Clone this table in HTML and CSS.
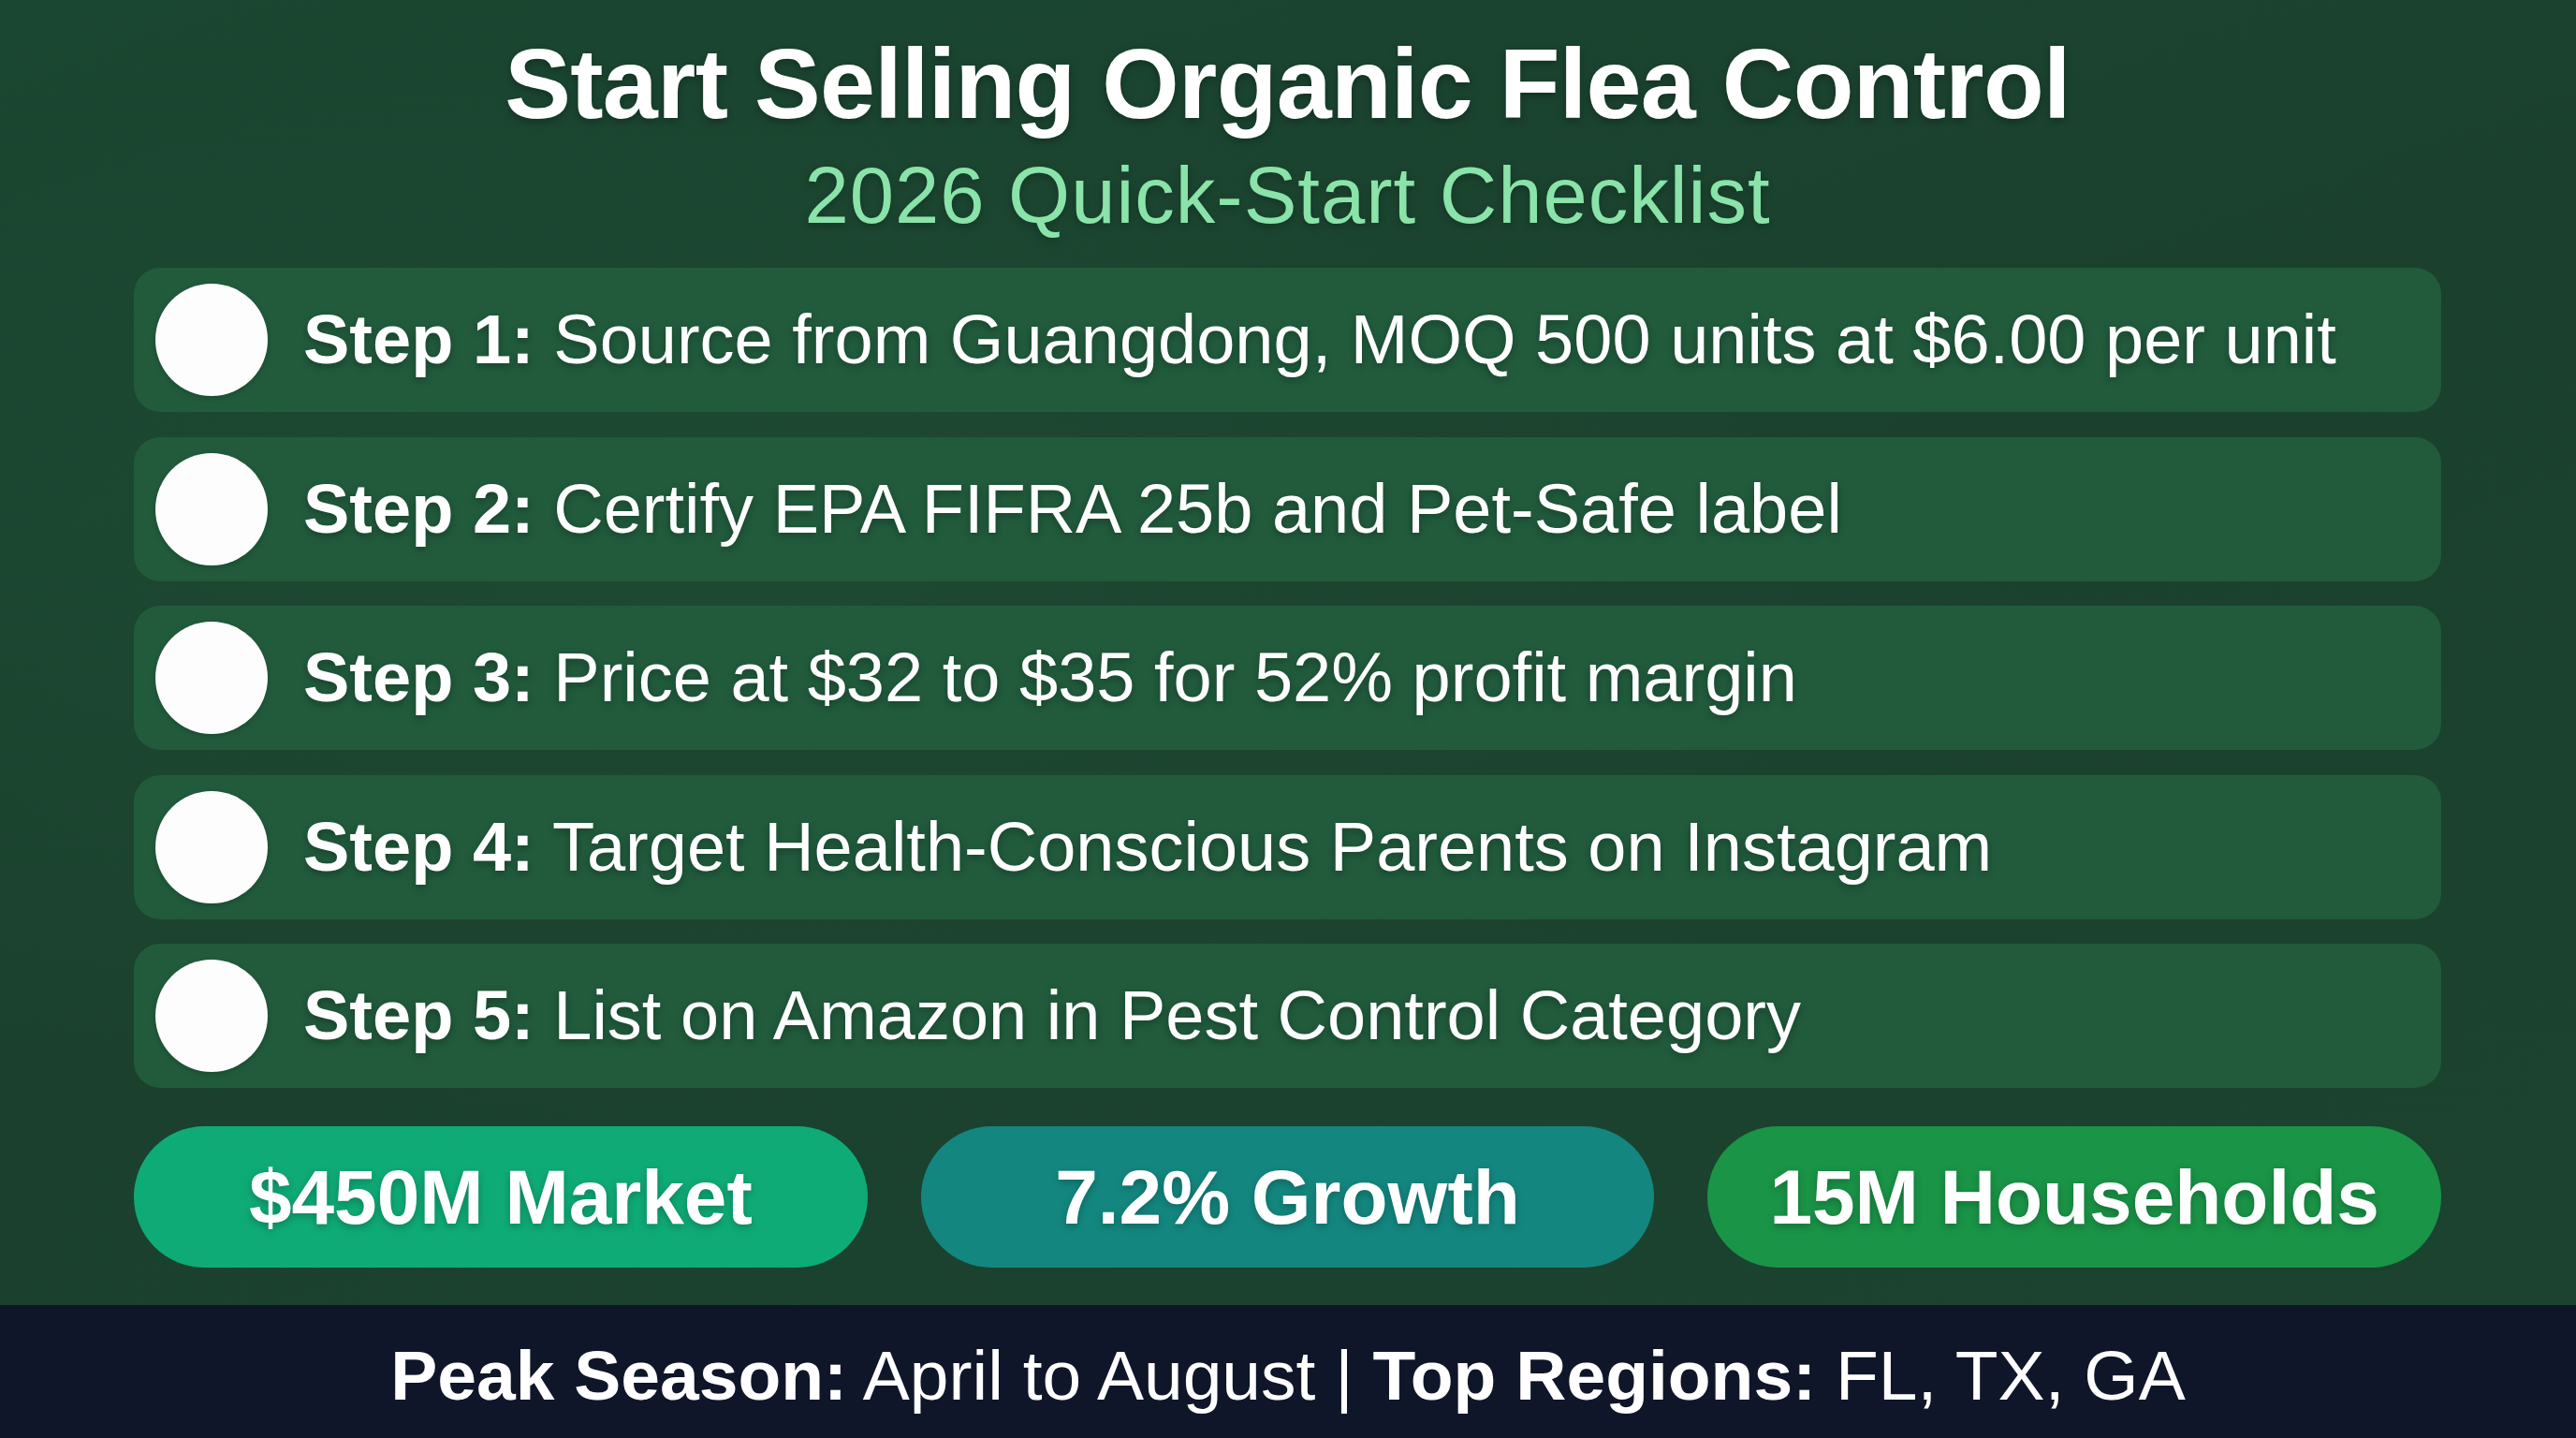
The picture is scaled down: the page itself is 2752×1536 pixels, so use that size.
FILE: index.html
```html
<!DOCTYPE html>
<html lang="en">
<head>
<meta charset="utf-8">
<title>Start Selling Organic Flea Control</title>
<link rel="stylesheet" href="styles.css">
</head>
<body>
<div class="page">
  <main class="main">
    <header class="header">
      <h1 class="title">Start Selling Organic Flea Control</h1>
      <p class="subtitle">2026 Quick-Start Checklist</p>
    </header>
    <ul class="steps">
      <li class="step"><span class="check"></span><span class="step-text"><strong>Step 1:</strong> Source from Guangdong, MOQ 500 units at $6.00 per unit</span></li>
      <li class="step"><span class="check"></span><span class="step-text"><strong>Step 2:</strong> Certify EPA FIFRA 25b and Pet-Safe label</span></li>
      <li class="step"><span class="check"></span><span class="step-text"><strong>Step 3:</strong> Price at $32 to $35 for 52% profit margin</span></li>
      <li class="step"><span class="check"></span><span class="step-text"><strong>Step 4:</strong> Target Health-Conscious Parents on Instagram</span></li>
      <li class="step"><span class="check"></span><span class="step-text"><strong>Step 5:</strong> List on Amazon in Pest Control Category</span></li>
    </ul>
    <div class="stats">
      <div class="stat stat-emerald">$450M Market</div>
      <div class="stat stat-teal">7.2% Growth</div>
      <div class="stat stat-green">15M Households</div>
    </div>
  </main>
  <footer class="footer">
    <p class="footer-text"><strong>Peak Season:</strong> April to August | <strong>Top Regions:</strong> FL, TX, GA</p>
  </footer>
</div>
</body>
</html>
```
FILE: styles.css
```css
* { box-sizing: border-box; }

html, body {
  margin: 0;
  padding: 0;
}

body {
  width: 2752px;
  height: 1536px;
  overflow: hidden;
  font-family: "Liberation Sans", Arial, sans-serif;
  color: #ffffff;
  background: #1a4430;
}

.page {
  width: 2752px;
  height: 1536px;
  display: flex;
  flex-direction: column;
}

.main {
  flex: 1;
  display: flex;
  flex-direction: column;
  padding: 36px 144px 0 143px;
  background:
    radial-gradient(ellipse 70% 60% at 30% 45%, rgba(34, 84, 56, 0.35), rgba(34, 84, 56, 0) 70%),
    linear-gradient(160deg, #1a4731 0%, #1b412e 50%, #1b432f 100%);
}

.header {
  display: flex;
  flex-direction: column;
  align-items: center;
  text-align: center;
}

.title {
  margin: 0;
  font-size: 106px;
  line-height: 1;
  font-weight: 700;
  letter-spacing: -0.7px;
  color: #ffffff;
  text-shadow: 0 3px 8px rgba(0, 0, 0, 0.3);
}

.subtitle {
  margin: 24px 0 0;
  font-size: 85px;
  line-height: 1;
  font-weight: 400;
  letter-spacing: 1px;
  color: #8ae3a9;
  text-shadow: 0 3px 8px rgba(0, 0, 0, 0.25);
}

.steps {
  list-style: none;
  margin: 35px 0 0;
  padding: 0;
  display: flex;
  flex-direction: column;
  gap: 26.5px;
}

.step {
  height: 154px;
  display: flex;
  align-items: center;
  gap: 38px;
  padding-left: 23px;
  border-radius: 28px;
  background: #215b3c;
}

.check {
  flex: none;
  width: 120px;
  height: 120px;
  border-radius: 50%;
  background: #fdfdfd;
  box-shadow: 0 2px 6px rgba(0, 0, 0, 0.2);
}

.step-text {
  font-size: 74px;
  line-height: 1;
  white-space: nowrap;
  color: #ffffff;
  text-shadow: 0 3px 8px rgba(0, 0, 0, 0.3);
}

.step-text strong,
.footer-text strong {
  font-weight: 700;
}

.stats {
  margin-top: 41px;
  display: grid;
  grid-template-columns: repeat(3, 1fr);
  gap: 57px;
}

.stat {
  height: 151px;
  border-radius: 76px;
  display: flex;
  align-items: center;
  justify-content: center;
  font-size: 82px;
  font-weight: 700;
  line-height: 1;
  color: #ffffff;
  text-shadow: 0 3px 8px rgba(0, 0, 0, 0.25);
}

.stat-emerald { background: #0fab77; }
.stat-teal { background: #13877f; }
.stat-green { background: #1a9447; }

.footer {
  flex: none;
  height: 142px;
  display: flex;
  align-items: center;
  justify-content: center;
  padding-top: 9px;
  background: #0f1629;
}

.footer-text {
  margin: 0;
  font-size: 75px;
  line-height: 1;
  white-space: nowrap;
  color: #ffffff;
}
```
